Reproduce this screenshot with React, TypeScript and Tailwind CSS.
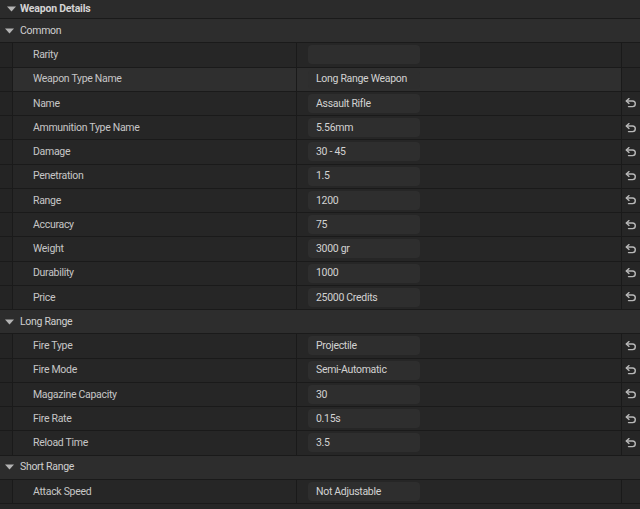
import React from "react";

type Prop = { label: string; value: string; reset?: boolean; hover?: boolean };

const common: Prop[] = [
  { label: "Rarity", value: "" },
  { label: "Weapon Type Name", value: "Long Range Weapon", hover: true },
  { label: "Name", value: "Assault Rifle", reset: true },
  { label: "Ammunition Type Name", value: "5.56mm", reset: true },
  { label: "Damage", value: "30 - 45", reset: true },
  { label: "Penetration", value: "1.5", reset: true },
  { label: "Range", value: "1200", reset: true },
  { label: "Accuracy", value: "75", reset: true },
  { label: "Weight", value: "3000 gr", reset: true },
  { label: "Durability", value: "1000", reset: true },
  { label: "Price", value: "25000 Credits", reset: true },
];

const longRange: Prop[] = [
  { label: "Fire Type", value: "Projectile", reset: true },
  { label: "Fire Mode", value: "Semi-Automatic", reset: true },
  { label: "Magazine Capacity", value: "30", reset: true },
  { label: "Fire Rate", value: "0.15s", reset: true },
  { label: "Reload Time", value: "3.5", reset: true },
];

const shortRange: Prop[] = [{ label: "Attack Speed", value: "Not Adjustable" }];

function Arrow() {
  return (
    <svg width="9" height="6" viewBox="0 0 9 6" className="shrink-0">
      <path d="M0 0.5 L9 0.5 L4.5 5.5 Z" fill="#b4b4b4" />
    </svg>
  );
}

function ResetIcon() {
  return (
    <svg width="12" height="10" viewBox="0 0 12 10">
      <path
        d="M1.5 3 H7.5 A2.8 2.8 0 0 1 7.5 8.6 H3.5"
        fill="none"
        stroke="#b8b8b8"
        strokeWidth="1.4"
        strokeLinecap="round"
      />
      <path
        d="M4 0.6 L1.3 3 L4 5.4"
        fill="none"
        stroke="#b8b8b8"
        strokeWidth="1.4"
        strokeLinecap="round"
        strokeLinejoin="round"
      />
    </svg>
  );
}

function Category({ title }: { title: string }) {
  return (
    <div className="flex h-[24.25px] items-center border-b border-[#1a1a1a] bg-[#2d2d2d] pl-[5px]">
      <Arrow />
      <span className="ml-[6px] text-[10.5px] tracking-[-0.3px] text-[#cfcfcf]">{title}</span>
    </div>
  );
}

function Row({ p }: { p: Prop }) {
  const bg = p.hover ? "bg-[#2f2f2f]" : "bg-[#262626]";
  return (
    <div className="flex h-[24.25px] border-b border-[#1a1a1a]">
      <div className="w-[13px] shrink-0 border-r border-[#1a1a1a] bg-[#242424]" />
      <div
        className={`flex w-[284px] shrink-0 items-center border-r border-[#1a1a1a] pl-[20px] text-[10.5px] tracking-[-0.3px] text-[#c6c6c6] ${bg}`}
      >
        {p.label}
      </div>
      <div className={`flex flex-1 items-center pl-[11px] ${bg}`}>
        <div className="flex h-[19px] w-[112px] items-center rounded-[4px] bg-[#2e2e2e] pl-[8px] text-[10.5px] tracking-[-0.3px] text-[#d2d2d2]">
          {p.value}
        </div>
      </div>
      <div className="flex w-[19px] shrink-0 items-center justify-center border-l border-[#1a1a1a] bg-[#262626]">
        {p.reset ? <ResetIcon /> : null}
      </div>
    </div>
  );
}

export default function App() {
  return (
    <div
      className="h-[509px] w-[640px] overflow-hidden bg-[#262626]"
      style={{ fontFamily: "Roboto, 'Noto Sans', sans-serif" }}
    >
      <div className="flex h-[19px] items-center border-b border-[#1a1a1a] bg-[#2b2b2b] pl-[7px]">
        <Arrow />
        <span className="ml-[4px] text-[10.5px] font-bold tracking-[-0.2px] text-[#d4d4d4]">Weapon Details</span>
      </div>
      <Category title="Common" />
      {common.map((p) => (
        <Row key={p.label} p={p} />
      ))}
      <Category title="Long Range" />
      {longRange.map((p) => (
        <Row key={p.label} p={p} />
      ))}
      <Category title="Short Range" />
      {shortRange.map((p) => (
        <Row key={p.label} p={p} />
      ))}
    </div>
  );
}
